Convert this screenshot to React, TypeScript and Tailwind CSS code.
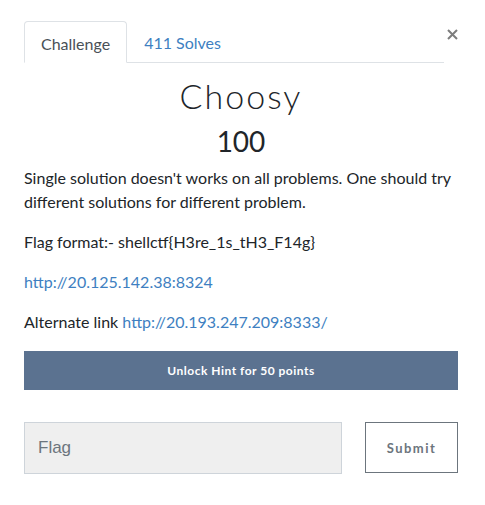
import { FC } from 'react';

const Tabs: FC = () => {
	return (
		<div className="flex flex-row items-start">
			<div className="flex flex-1 flex-row border-b border-[#dee2e6]">
				<div className="-mb-px h-[42px] rounded-t border border-[#dee2e6] border-b-white bg-white px-[16px] pt-[10px] text-[#495057]">
					Challenge
				</div>
				<div className="h-[41px] px-[17px] pt-[10px] text-[#3e7fc1]">411 Solves</div>
			</div>
			<button className="ml-[2px] mt-[7px] flex h-[12px] w-[12px] items-center justify-center">
				<svg width="11" height="11" viewBox="0 0 11 11">
					<path d="M1 1L10 10M10 1L1 10" stroke="#7d7d7d" strokeWidth="2" />
				</svg>
			</button>
		</div>
	);
};

export default function App() {
	return (
		<div className="w-[485px] h-[505px] bg-white px-[24px] pt-[21px] pr-[27px] font-['Lato','Noto_Sans',sans-serif] text-[16px] leading-[24px] text-[#212529]">
			<Tabs />
			<h3 className="mt-[13px] text-center text-[34px] font-light leading-[40px] tracking-[2px] text-[#212529]">
				Choosy
			</h3>
			<h4 className="mt-[8px] text-center text-[28px] font-normal leading-[34px]">100</h4>
			<div className="mt-[8px]">
				<p>
					Single solution doesn't works on all problems. One should try different solutions for
					different problem.
				</p>
				<p className="mt-[16px]">Flag format:- shellctf{'{'}H3re_1s_tH3_F14g{'}'}</p>
				<p className="mt-[16px]">
					<a className="text-[#3e7fc1]">http://20.125.142.38:8324</a>
				</p>
				<p className="mt-[16px]">
					Alternate link <a className="text-[#3e7fc1]">http://20.193.247.209:8333/</a>
				</p>
			</div>
			<button className="mt-[17px] flex h-[39px] w-full items-center justify-center bg-[#5b7290] text-[12px] font-bold tracking-[0.5px] text-white">
				Unlock Hint for 50 points
			</button>
			<div className="mt-[32px] flex flex-row gap-[23px]">
				<input
					placeholder="Flag"
					className="h-[52px] flex-1 border border-[#ced4da] bg-[#efefef] px-[13px] font-['Liberation_Sans',sans-serif] text-[17px] placeholder:text-[#6c757d] outline-none"
				/>
				<button className="h-[51px] w-[93px] border border-[#6c757d] bg-white text-[13px] font-bold tracking-[1.5px] text-[#6c757d]">
					Submit
				</button>
			</div>
		</div>
	);
}
